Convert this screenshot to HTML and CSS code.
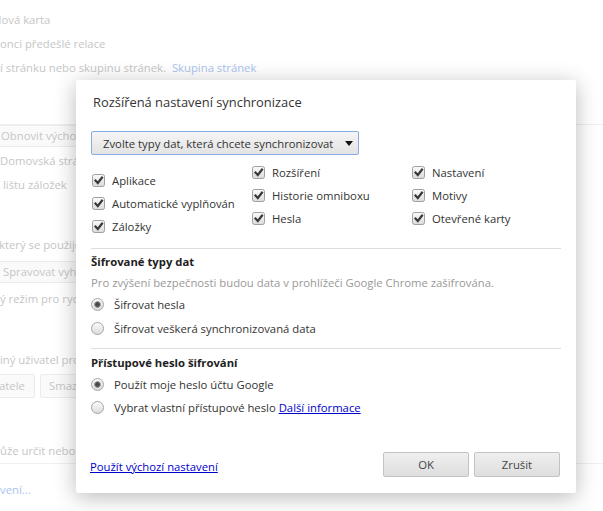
FILE: index.html
```html
<!DOCTYPE html>
<html lang="cs">
<head>
<meta charset="utf-8">
<title>Rozšířená nastavení synchronizace</title>
<link rel="stylesheet" href="styles.css">
</head>
<body>
<div class="page">
  <div class="bg-line l1">Nová karta</div>
  <div class="bg-line l2">onci předešlé relace</div>
  <div class="bg-line l3">í stránku nebo skupinu stránek. &nbsp;<span class="bg-link">Skupina stránek</span></div>
  <div class="bg-rule r1"></div>
  <div class="under">
    <div class="bg-btn b1">Obnovit výchozí</div>
    <div class="bg-line l4">Domovská strá</div>
    <div class="bg-line l5">lištu záložek</div>
    <div class="bg-line l6">který se použije</div>
    <div class="bg-btn b2">Spravovat vyh</div>
    <div class="bg-line l7">ý režim pro ryc</div>
    <div class="bg-line l8">iný uživatel pro</div>
    <div class="bg-btns">
      <div class="bg-btn b3">atele</div>
      <div class="bg-btn b4">Smazat</div>
    </div>
    <div class="bg-line l9">ůže určit nebo</div>
  </div>
  <div class="bg-rule r2"></div>
  <div class="bg-line l10 bg-link">vení...</div>
</div>

<div class="dialog">
  <div class="title">Rozšířená nastavení synchronizace</div>
  <div class="body">
    <div class="select">
      <span class="select-text">Zvolte typy dat, která chcete synchronizovat</span>
      <svg class="arrow" viewBox="0 0 8 5"><path d="M0 0 H8 L4 5 Z"/></svg>
    </div>
    <div class="types">
      <div class="col col1">
        <div class="cb-row"><svg class="cb" viewBox="0 0 13 13"><rect x="0.5" y="0.5" width="12" height="12" rx="2"/><path d="M3.5 6.6 L5.8 9 L10 3.6"/></svg><span>Aplikace</span></div>
        <div class="cb-row"><svg class="cb" viewBox="0 0 13 13"><rect x="0.5" y="0.5" width="12" height="12" rx="2"/><path d="M3.5 6.6 L5.8 9 L10 3.6"/></svg><span>Automatické vyplňování</span></div>
        <div class="cb-row"><svg class="cb" viewBox="0 0 13 13"><rect x="0.5" y="0.5" width="12" height="12" rx="2"/><path d="M3.5 6.6 L5.8 9 L10 3.6"/></svg><span>Záložky</span></div>
      </div>
      <div class="col">
        <div class="cb-row"><svg class="cb" viewBox="0 0 13 13"><rect x="0.5" y="0.5" width="12" height="12" rx="2"/><path d="M3.5 6.6 L5.8 9 L10 3.6"/></svg><span>Rozšíření</span></div>
        <div class="cb-row"><svg class="cb" viewBox="0 0 13 13"><rect x="0.5" y="0.5" width="12" height="12" rx="2"/><path d="M3.5 6.6 L5.8 9 L10 3.6"/></svg><span>Historie omniboxu</span></div>
        <div class="cb-row"><svg class="cb" viewBox="0 0 13 13"><rect x="0.5" y="0.5" width="12" height="12" rx="2"/><path d="M3.5 6.6 L5.8 9 L10 3.6"/></svg><span>Hesla</span></div>
      </div>
      <div class="col">
        <div class="cb-row"><svg class="cb" viewBox="0 0 13 13"><rect x="0.5" y="0.5" width="12" height="12" rx="2"/><path d="M3.5 6.6 L5.8 9 L10 3.6"/></svg><span>Nastavení</span></div>
        <div class="cb-row"><svg class="cb" viewBox="0 0 13 13"><rect x="0.5" y="0.5" width="12" height="12" rx="2"/><path d="M3.5 6.6 L5.8 9 L10 3.6"/></svg><span>Motivy</span></div>
        <div class="cb-row"><svg class="cb" viewBox="0 0 13 13"><rect x="0.5" y="0.5" width="12" height="12" rx="2"/><path d="M3.5 6.6 L5.8 9 L10 3.6"/></svg><span>Otevřené karty</span></div>
      </div>
    </div>
    <div class="rule rule1"></div>
    <div class="heading h1">Šifrované typy dat</div>
    <div class="desc">Pro zvýšení bezpečnosti budou data v prohlížeči Google Chrome zašifrována.</div>
    <div class="radio-row tall"><svg class="radio" viewBox="0 0 13 13"><circle class="ring" cx="6.5" cy="6.5" r="6"/><circle class="dot" cx="6.5" cy="6.5" r="3"/></svg><span>Šifrovat hesla</span></div>
    <div class="radio-row tall"><svg class="radio" viewBox="0 0 13 13"><circle class="ring" cx="6.5" cy="6.5" r="6"/></svg><span>Šifrovat veškerá synchronizovaná data</span></div>
    <div class="rule rule2"></div>
    <div class="heading h2">Přístupové heslo šifrování</div>
    <div class="radio-row first"><svg class="radio" viewBox="0 0 13 13"><circle class="ring" cx="6.5" cy="6.5" r="6"/><circle class="dot" cx="6.5" cy="6.5" r="3"/></svg><span>Použít moje heslo účtu Google</span></div>
    <div class="radio-row"><svg class="radio" viewBox="0 0 13 13"><circle class="ring" cx="6.5" cy="6.5" r="6"/></svg><span>Vybrat vlastní přístupové heslo&nbsp;<a class="link" href="#">Další informace</a></span></div>
  </div>
  <div class="actions">
    <a class="link reset" href="#">Použít výchozí nastavení</a>
    <div class="buttons">
      <div class="btn">OK</div>
      <div class="btn">Zrušit</div>
    </div>
  </div>
</div>
<svg class="defs" width="0" height="0" aria-hidden="true">
  <defs>
    <linearGradient id="ctl" x1="0" y1="0" x2="0" y2="1">
      <stop offset="0" stop-color="#fcfcfc"/>
      <stop offset="1" stop-color="#dadada"/>
    </linearGradient>
  </defs>
</svg>
</body>
</html>
```

FILE: styles.css
```css
* { box-sizing: border-box; }
html, body { margin: 0; padding: 0; }
body {
  width: 603px;
  height: 511px;
  overflow: hidden;
  background: #fff;
  font-family: "Open Sans", "Noto Sans", sans-serif;
  font-size: 11.3px;
  color: #333;
  position: relative;
}
.defs { position: absolute; }

/* faded settings page behind the overlay */
.page {
  display: flex;
  flex-direction: column;
  color: #c6c6c6;
  white-space: nowrap;
}
.under {
  width: 76px;
  overflow: hidden;
  display: flex;
  flex-direction: column;
}
.bg-line { height: 24px; line-height: 24px; }
.bg-link { color: #aac3ee; }
.l1 { margin-top: 8px; margin-left: -7px; }
.bg-rule { height: 1px; background: #f0f0f0; }
.r1 { margin-top: 44px; }
.bg-btn {
  height: 22px;
  line-height: 20px;
  border: 1px solid #ececec;
  border-radius: 2px;
  background: #fafafa;
  padding: 0 8px;
  overflow: hidden;
}
.b1 { margin-left: -8px; width: 100px; }
.l4 { margin-top: 2px; }
.l5 { margin-left: 3px; }
.l6 { margin-top: 36px; margin-left: -1px; }
.b2 { margin-top: 4px; margin-left: -6px; width: 100px; }
.l7 { margin-top: 4px; }
.l8 { margin-top: 37px; }
.bg-btns { display: flex; gap: 5px; margin-top: 2px; }
.bg-btns .bg-btn { flex: none; height: 24px; line-height: 22px; }
.b3 { margin-left: -10px; width: 45px; }
.b4 { width: 60px; }
.l9 { margin-top: 41px; }
.l10 { margin-top: 14px; }

/* dialog */
.dialog {
  position: absolute;
  left: 76px;
  top: 80px;
  width: 500px;
  height: 413px;
  background: #fff;
  border-radius: 2px;
  box-shadow: 0 4px 22px rgba(0, 0, 0, 0.28);
  display: flex;
  flex-direction: column;
}
.title {
  font-size: 12.9px;
  line-height: 18px;
  padding: 13px 17px 13px;
  color: #333;
}
.body { padding: 0 15px; }
.select {
  margin-top: 7px;
  width: 268px;
  height: 24px;
  border: 1px solid #86ace3;
  border-radius: 2px;
  background: linear-gradient(#f5f5f5, #e3e3e3);
  display: flex;
  align-items: center;
  justify-content: space-between;
  padding: 0 5px 0 11px;
  color: #333;
  white-space: nowrap;
}
.arrow { flex: none; width: 8px; height: 5px; fill: #111; }
.types { display: flex; margin-top: 6px; padding-left: 1px; }
.col { flex: none; width: 160px; display: flex; flex-direction: column; white-space: nowrap; }
.col1 { width: 143px; margin-right: 17px; margin-top: 8px; overflow: hidden; }
.cb-row { height: 23px; display: flex; align-items: center; }
.cb { flex: none; width: 13px; height: 13px; margin-right: 7px; }
.cb rect { fill: url(#ctl); stroke: #a0a0a0; stroke-width: 1; }
.cb path { fill: none; stroke: #3a3a3a; stroke-width: 2.2; stroke-linecap: square; }
.rule { height: 1px; background: #dedede; }
.rule1 { margin-top: 10px; }
.rule2 { margin-top: 8px; }
.heading { font-weight: bold; line-height: 18px; color: #222; }
.h1 { margin-top: 4px; }
.h2 { margin-top: 5px; }
.desc { margin-top: 3px; line-height: 18px; color: #999; }
.radio-row { height: 23px; display: flex; align-items: center; white-space: nowrap; }
.radio-row.tall { height: 24px; }
.radio-row.first { margin-top: 1px; }
.radio { flex: none; width: 13px; height: 13px; margin-right: 10px; }
.radio .ring { fill: url(#ctl); stroke: #a4a4a4; stroke-width: 1; }
.radio .dot { fill: #4a4a4a; stroke: #a8a8a8; stroke-width: 1; }
.link { color: #00c; text-decoration: underline; }
.actions {
  margin-top: auto;
  padding: 0 16px 16px 14px;
  display: flex;
  justify-content: space-between;
  align-items: center;
}
.reset { margin-top: 3px; }
.buttons { display: flex; gap: 5px; }
.btn {
  width: 86px;
  height: 25px;
  line-height: 23px;
  text-align: center;
  border: 1px solid #c3c3c3;
  border-radius: 2px;
  background: linear-gradient(#efefef, #dedede);
  color: #444;
}
```
